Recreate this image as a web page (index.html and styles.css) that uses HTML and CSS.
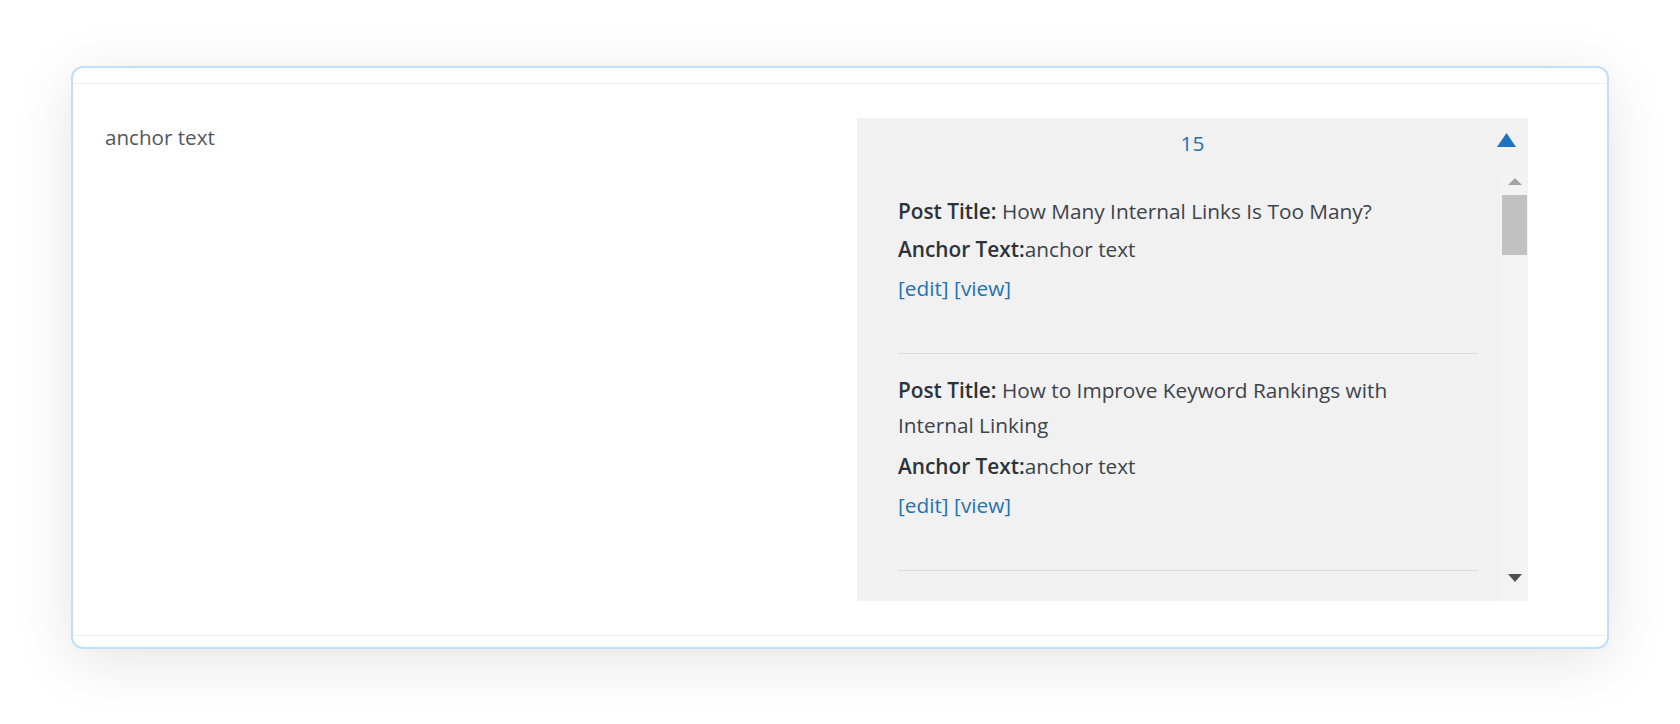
FILE: index.html
```html
<!DOCTYPE html>
<html>
<head>
<meta charset="utf-8">
<link rel="stylesheet" href="styles.css">
</head>
<body>
<div class="card">
  <div class="card-head"></div>
  <div class="row">
    <div class="cell-label">anchor text</div>
    <div class="panel">
      <div class="panel-head">
        <span></span>
        <span class="count">15</span>
        <svg class="toggle" width="19" height="14" viewBox="0 0 19 14"><polygon points="9.5,0 19,14 0,14" fill="#1e73be"/></svg>
      </div>
      <div class="scroll">
        <div class="list">
          <div class="item">
            <p class="title"><b>Post Title:</b> How Many Internal Links Is Too Many?</p>
            <p><b>Anchor Text:</b>anchor text</p>
            <p><a href="#">[edit]</a> <a href="#">[view]</a></p>
          </div>
          <div class="item">
            <p class="title wrapped"><b>Post Title:</b> How to Improve Keyword Rankings with Internal Linking</p>
            <p><b>Anchor Text:</b>anchor text</p>
            <p><a href="#">[edit]</a> <a href="#">[view]</a></p>
          </div>
        </div>
        <div class="bar">
          <svg class="arrow-up" width="14" height="7" viewBox="0 0 14 7"><polygon points="7,0 14,7 0,7" fill="#a3a3a3"/></svg>
          <div class="thumb"></div>
          <div class="bar-fill"></div>
          <svg class="arrow-down" width="14" height="8" viewBox="0 0 14 8"><polygon points="0,0 14,0 7,8" fill="#505050"/></svg>
        </div>
      </div>
    </div>
  </div>
  <div class="card-foot"></div>
</div>
</body>
</html>
```

FILE: styles.css
```css
html {
  margin: 0;
  padding: 0;
  background: #ffffff;
}
body {
  margin: 0;
  box-sizing: border-box;
  min-height: 100vh;
  font-family: "Open Sans", "Noto Sans", sans-serif;
  padding: 66px 0 0 71px;
}
.card {
  box-sizing: border-box;
  width: 1538px;
  height: 583px;
  border: 2px solid #bfe0fb;
  border-radius: 12px;
  background: #ffffff;
  box-shadow: 0 12px 60px rgba(0, 0, 0, 0.11);
  display: flex;
  flex-direction: column;
}
.card-head {
  height: 15px;
  border-bottom: 1px solid #f0f0f0;
}
.row {
  flex: 1;
  display: flex;
  justify-content: space-between;
}
.cell-label {
  padding-left: 32px;
  padding-top: 40px;
  font-size: 20.6px;
  line-height: 26px;
  color: #50575e;
}
.card-foot {
  height: 11px;
  border-top: 1px solid #f0f0f0;
}
.panel {
  margin-top: 34px;
  margin-right: 79px;
  width: 671px;
  height: 483px;
  background: #f1f1f1;
  display: flex;
  flex-direction: column;
}
.panel-head {
  height: 52px;
  display: grid;
  grid-template-columns: 1fr auto 1fr;
  align-items: start;
}
.count {
  color: #2271b1;
  font-size: 20.8px;
  line-height: 26px;
  padding-top: 12px;
}
.toggle {
  justify-self: end;
  margin-top: 15px;
  margin-right: 12px;
}
.scroll {
  flex: 1;
  display: flex;
  overflow: hidden;
}
.list {
  flex: 1;
  overflow: hidden;
  padding-top: 4.5px;
  padding-left: 41px;
  padding-right: 22px;
}
.item {
  padding-top: 19px;
  padding-bottom: 44px;
  padding-right: 40px;
  border-bottom: 1px solid #dcdcde;
}
.item p {
  margin: 0 0 4px 0;
  font-size: 20.8px;
  line-height: 34.5px;
  color: #3c434a;
}
.item p.wrapped {
  margin-bottom: 7px;
}
.item b {
  font-weight: 600;
  color: #2c3338;
}
.item a {
  color: #2271b1;
  text-decoration: none;
}
.bar {
  width: 28px;
  display: flex;
  flex-direction: column;
  align-items: center;
  background: #f3f3f3;
}
.arrow-up {
  margin-top: 8px;
  margin-left: 1px;
}
.thumb {
  margin-top: 10px;
  width: 25px;
  height: 60px;
  background: #c1c1c1;
}
.bar-fill {
  flex: 1;
}
.arrow-down {
  margin-bottom: 19px;
  margin-left: 1px;
}
```
